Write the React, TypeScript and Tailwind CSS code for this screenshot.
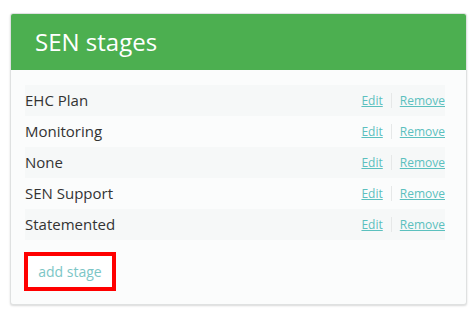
import React from 'react';

const stages = ['EHC Plan', 'Monitoring', 'None', 'SEN Support', 'Statemented'];

export default function App() {
  return (
    <div className="w-[476px] h-[315px] bg-white pt-[13px] pl-[10px]" style={{ fontFamily: '"Open Sans", sans-serif' }}>
      <div className="w-[457px] border border-[#dfe1e1] rounded-[3px] bg-[#fbfcfc] shadow-[0_1px_2px_rgba(0,0,0,0.15)]">
        <div className="h-[56px] bg-[#4caf50] rounded-t-[2px] flex items-center pl-[24px]">
          <h1 className="text-[24px] text-white leading-none">SEN stages</h1>
        </div>
        <div className="pl-[14px] pr-[21px] pt-[15px] pb-[13px]">
          <ul>
            {stages.map((s, i) => (
              <li
                key={s}
                className={`h-[31px] flex items-center justify-between ${i % 2 === 0 ? 'bg-[#f6f8f8]' : ''}`}
              >
                <span className="text-[15px] text-[#333]">{s}</span>
                <span className="flex items-center text-[12px] text-[#5bc0be]">
                  <a className="underline">Edit</a>
                  <span className="mx-[8px] w-px h-[15px] bg-[#e6e8e8]"></span>
                  <a className="underline">Remove</a>
                </span>
              </li>
            ))}
          </ul>
          <div className="mt-[12px] -ml-px w-[92px] h-[39px] border-4 border-[#ff0000] bg-white flex items-center justify-center">
            <span className="text-[14px] text-[#7cc6c6]">add stage</span>
          </div>
        </div>
      </div>
    </div>
  );
}
